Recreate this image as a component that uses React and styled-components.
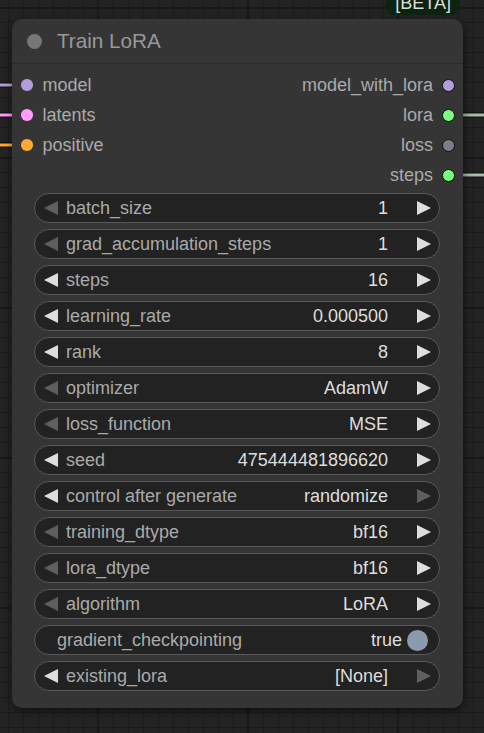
import React from "react";
import styled, { createGlobalStyle } from "styled-components";

const Global = createGlobalStyle`
  html, body { margin: 0; padding: 0; }
  body {
    width: 484px;
    height: 733px;
    overflow: hidden;
    background-color: #232323;
    background-image:
      linear-gradient(to right, #181818 2px, transparent 2px),
      linear-gradient(to bottom, #181818 2px, transparent 2px),
      linear-gradient(to right, #1b1b1b 1px, transparent 1px),
      linear-gradient(to bottom, #1b1b1b 1px, transparent 1px);
    background-size: 150px 150px, 150px 150px, 15px 15px, 15px 15px;
    background-position: 97px 7px, 97px 7px, 8px 7px, 8px 7px;
    font-family: "Liberation Sans", Arial, sans-serif;
  }
  #root { position: relative; width: 484px; height: 733px; }
`;

const Canvas = styled.div`
  position: relative;
  width: 484px;
  height: 733px;
  padding: 19px 0 0 12px;
  box-sizing: border-box;
`;

const Links = styled.svg`
  position: absolute;
  left: 0;
  top: 0;
  pointer-events: none;
`;

const Node = styled.div`
  position: relative;
  width: 451px;
  height: 689px;
  background: #353535;
  border-radius: 10px;
  box-shadow: 1px 3px 8px rgba(0, 0, 0, 0.55);
  display: flex;
  flex-direction: column;
`;

const Badge = styled.div`
  position: absolute;
  right: 3px;
  top: -32px;
  height: 28px;
  padding: 0 9px;
  display: flex;
  align-items: flex-end;
  padding-bottom: 3px;
  box-sizing: border-box;
  background: #0c230f;
  border-radius: 8px;
  color: #dddddd;
  font-size: 18px;
  line-height: 1;
`;

const TitleBar = styled.div`
  height: 45px;
  display: flex;
  align-items: center;
  padding-left: 15px;
  gap: 15px;
  border-bottom: 1px solid #2b2b2b;
  box-sizing: border-box;
`;

const TitleDot = styled.span`
  width: 15px;
  height: 15px;
  border-radius: 50%;
  background: #777777;
`;

const Title = styled.span`
  color: #999999;
  font-size: 20.7px;
`;

const Slots = styled.div`
  display: flex;
  justify-content: space-between;
  padding-top: 6px;
`;

const SlotCol = styled.div`
  display: flex;
  flex-direction: column;
`;

const Slot = styled.div`
  height: 30px;
  display: flex;
  align-items: center;
  flex-direction: ${(p) => (p.$right ? "row-reverse" : "row")};
  gap: ${(p) => (p.$right ? "9px" : "10px")};
  padding: ${(p) => (p.$right ? "0 8px 0 0" : "0 0 0 9px")};
  color: #aaaaaa;
  font-size: 18px;
`;

const SlotDot = styled.span`
  width: ${(p) => (p.$right ? "11px" : "11.5px")};
  height: ${(p) => (p.$right ? "11px" : "11.5px")};
  border-radius: 50%;
  background: ${(p) => p.$color};
  border: ${(p) => (p.$right ? "1px solid #111" : "none")};
  flex: none;
`;

const Widgets = styled.div`
  display: flex;
  flex-direction: column;
  gap: 6px;
  padding: 3px 23px 0 22px;
`;

const Widget = styled.div`
  height: 30px;
  box-sizing: border-box;
  border: 1px solid #595959;
  border-radius: 15px;
  background: #222222;
  display: flex;
  align-items: center;
  padding: ${(p) => (p.$toggle ? "0 11px 0 22px" : "0 8px 0 9px")};
  font-size: 18px;
`;

const Label = styled.span`
  color: #aaaaaa;
  margin-left: ${(p) => (p.$toggle ? "0" : "7px")};
  flex: 1;
  white-space: nowrap;
`;

const Value = styled.span`
  color: #dddddd;
  margin-right: ${(p) => (p.$toggle ? "5px" : "28px")};
  white-space: nowrap;
`;

const Knob = styled.span`
  width: 21px;
  height: 21px;
  border-radius: 50%;
  background: #8a9bb0;
`;

const Arrow = ({ dir, on }) => (
  <svg width="15" height="14" viewBox="0 0 15 14" style={{ flex: "none" }}>
    <polygon
      points={dir === "left" ? "14,0 14,14 0,7" : "1,0 1,14 15,7"}
      fill={on ? "#dddddd" : "#5f5f5f"}
    />
  </svg>
);

const inputs = [
  { name: "model", color: "#b39ddb" },
  { name: "latents", color: "#ff9cf9" },
  { name: "positive", color: "#ffa931" },
];
const outputs = [
  { name: "model_with_lora", color: "#b39ddb" },
  { name: "lora", color: "#7cfc7c" },
  { name: "loss", color: "#7c7c8c" },
  { name: "steps", color: "#7cfc7c" },
];

const widgets = [
  ["batch_size", "1", 0, 1],
  ["grad_accumulation_steps", "1", 0, 1],
  ["steps", "16", 1, 1],
  ["learning_rate", "0.000500", 1, 1],
  ["rank", "8", 1, 1],
  ["optimizer", "AdamW", 0, 1],
  ["loss_function", "MSE", 0, 1],
  ["seed", "475444481896620", 1, 1],
  ["control after generate", "randomize", 1, 0],
  ["training_dtype", "bf16", 0, 1],
  ["lora_dtype", "bf16", 0, 1],
  ["algorithm", "LoRA", 0, 1],
  ["gradient_checkpointing", "true", null, null],
  ["existing_lora", "[None]", 1, 0],
];

export default function App() {
  return (
    <>
      <Global />
      <Canvas>
        <Links width="484" height="733">
          <line x1="0" y1="85" x2="13" y2="85" stroke="#111" strokeWidth="5" />
          <line x1="0" y1="85" x2="13" y2="85" stroke="#b39ddb" strokeWidth="3" />
          <line x1="0" y1="115" x2="13" y2="115" stroke="#111" strokeWidth="5" />
          <line x1="0" y1="115" x2="13" y2="115" stroke="#ff9cf9" strokeWidth="3" />
          <line x1="0" y1="145" x2="13" y2="145" stroke="#111" strokeWidth="5" />
          <line x1="0" y1="145" x2="13" y2="145" stroke="#ffa931" strokeWidth="3" />
          <line x1="462" y1="115" x2="484" y2="115" stroke="#111" strokeWidth="5" />
          <line x1="462" y1="115" x2="484" y2="115" stroke="#a9bca9" strokeWidth="3" />
          <line x1="462" y1="175" x2="484" y2="175" stroke="#111" strokeWidth="5" />
          <line x1="462" y1="175" x2="484" y2="175" stroke="#a9bca9" strokeWidth="3" />
        </Links>
        <Node>
          <Badge>[BETA]</Badge>
          <TitleBar>
            <TitleDot />
            <Title>Train LoRA</Title>
          </TitleBar>
          <Slots>
            <SlotCol>
              {inputs.map((s) => (
                <Slot key={s.name}>
                  <SlotDot $color={s.color} />
                  {s.name}
                </Slot>
              ))}
            </SlotCol>
            <SlotCol>
              {outputs.map((s) => (
                <Slot key={s.name} $right>
                  <SlotDot $right $color={s.color} />
                  {s.name}
                </Slot>
              ))}
            </SlotCol>
          </Slots>
          <Widgets>
            {widgets.map(([label, value, l, r]) =>
              l === null ? (
                <Widget key={label} $toggle>
                  <Label $toggle>{label}</Label>
                  <Value $toggle>{value}</Value>
                  <Knob />
                </Widget>
              ) : (
                <Widget key={label}>
                  <Arrow dir="left" on={l} />
                  <Label>{label}</Label>
                  <Value>{value}</Value>
                  <Arrow dir="right" on={r} />
                </Widget>
              )
            )}
          </Widgets>
        </Node>
      </Canvas>
    </>
  );
}
